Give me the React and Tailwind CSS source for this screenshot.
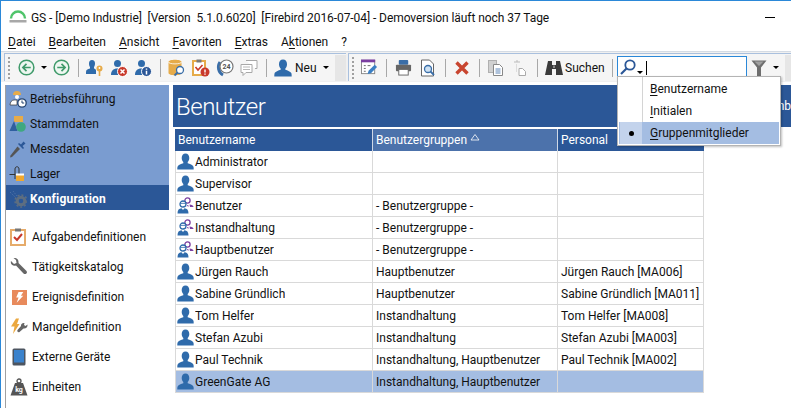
import React from 'react';

const Person = ({ className = 'w-[17px] h-[17px]' }) => (
  <svg viewBox="0 0 17 17" className={className}>
    <path d="M8.500 0.500c2.400 0 3.800 1.900 3.800 4.400 0 1.700-.7 3.200-1.600 4.100v1.200c1.900.7 5.300 1.700 5.800 3.500.2.800.2 2.300.2 2.800H0.300c0-.5 0-2 .2-2.800.5-1.800 3.900-2.800 5.800-3.500V9C5.400 8.100 4.700 6.600 4.700 4.900c0-2.500 1.400-4.400 3.800-4.400z" fill="#2f6bab" />
  </svg>
);

const Group = () => (
  <svg viewBox="0 0 17 17" className="w-[17px] h-[17px]">
    <circle cx="10.500" cy="3.500" r="2.600" fill="#fff" stroke="#7b3fa0" strokeWidth="1.300" />
    <path d="M12.500 7.500c2 .2 4 1 4 2.500h-3.500z" fill="#7b3fa0" />
    <path d="M10 8l1.500 1.500M11.500 8L10 9.500" stroke="#7b3fa0" strokeWidth="0.700" />
    <circle cx="6" cy="7" r="3" fill="#fff" stroke="#2f6bab" strokeWidth="1.300" />
    <path d="M3.500 6.500c1.500-.2 3.500-.2 5 0" stroke="#2f6bab" strokeWidth="0.800" fill="none" />
    <path d="M0.500 16.500c0-3.500 1.500-5 4-5.200L6 13l1.500-1.700c2.500.2 4 1.700 4 5.200z" fill="#2f6bab" />
  </svg>
);

const Slot = ({ children }) => <div className="w-[24px] h-[24px] flex items-center justify-center shrink-0">{children}</div>;

const Sep = () => (
  <div className="w-[10px] flex justify-center shrink-0">
    <div className="w-px h-[18px] bg-[#a8a8a8]" />
  </div>
);

const Grip = () => (
  <div className="flex flex-col gap-[2px] mr-[3px] ml-[3px] shrink-0">
    {[0, 1, 2, 3, 4, 5].map((i) => <div key={i} className="w-[2px] h-[2px] bg-[#a0a0a0]" />)}
  </div>
);

const Caret = () => <div className="w-0 h-0 border-x-[3px] border-x-transparent border-t-[3px] border-t-black" />;

const CircleArrow = ({ flip }) => (
  <svg viewBox="0 0 18 18" className="w-[17px] h-[17px]">
    <circle cx="9" cy="9" r="7.800" fill="#eef7f1" stroke="#3f9a6a" strokeWidth="1.600" />
    <path d={flip ? 'M4.500 9h8M9 5.200 12.800 9 9 12.800' : 'M13.500 9h-8M9 5.200 5.200 9 9 12.800'} fill="none" stroke="#3f9a6a" strokeWidth="1.800" />
  </svg>
);

const UserKey = () => (
  <svg viewBox="0 0 18 18" className="w-[18px] h-[18px]">
    <path d="M6 1c2 0 3 1.500 3 3.500S8.400 7.500 8 8v1.500c1 .4 2 .8 2 2V15H0c0-2.500 0-3.500 1-4.200.8-.5 2-.9 3-1.300V8C3.500 7.500 3 6.500 3 4.500S4 1 6 1z" fill="#2f6bab" />
    <circle cx="13.500" cy="9.500" r="3" fill="#e6ab4a" />
    <circle cx="13.500" cy="9" r="0.900" fill="#fff" />
    <path d="M12.700 11.500h1.600v5.500h-1.600z" fill="#e6ab4a" />
  </svg>
);

const UserBadge = ({ color, glyph }) => (
  <svg viewBox="0 0 18 18" className="w-[18px] h-[18px]">
    <circle cx="7.500" cy="4.500" r="3.500" fill="#2f6bab" />
    <path d="M1 16c0-4 2-6.500 6.500-6.500S12 12 12 16z" fill="#2f6bab" />
    <circle cx="12.500" cy="12.500" r="5" fill={color} stroke="#fff" strokeWidth="1" />
    {glyph === 'x' ? (
      <path d="M10.500 10.500l4 4m0-4l-4 4" stroke="#fff" strokeWidth="1.500" />
    ) : (
      <path d="M12.500 9.500v1.200M12.500 11.800v3.600" stroke="#fff" strokeWidth="1.500" />
    )}
  </svg>
);

const DbSearch = () => (
  <svg viewBox="0 0 18 18" className="w-[18px] h-[18px]">
    <path d="M0.500 3c0-3 13-3 13 0v11c0 3-13 3-13 0z" fill="#e6ab4a" />
    <path d="M0.500 3c0 2.500 13 2.500 13 0" fill="none" stroke="#fff" strokeWidth="0.800" />
    <circle cx="12" cy="11" r="3.500" fill="#fff" stroke="#3a6ea8" strokeWidth="1.300" />
    <path d="M9.500 13.500l-3 3" stroke="#3a6ea8" strokeWidth="1.800" />
  </svg>
);

const ClipAlert = () => (
  <svg viewBox="0 0 18 18" className="w-[18px] h-[18px]">
    <rect x="1" y="2" width="12" height="14" fill="#fff" stroke="#e6ab4a" strokeWidth="2" />
    <rect x="4.500" y="0.500" width="5" height="3" fill="#7a7a7a" />
    <path d="M3.500 8l2.500 3 4.500-5" fill="none" stroke="#c8392b" strokeWidth="1.600" />
    <circle cx="13" cy="13" r="4.500" fill="#c8392b" />
    <path d="M13 10.500v3M13 14.500v1.200" stroke="#fff" strokeWidth="1.400" />
  </svg>
);

const Clock24 = () => (
  <svg viewBox="0 0 18 18" className="w-[18px] h-[18px]">
    <path d="M4 3a9 9 0 0 0 3 13" fill="none" stroke="#3a6ea8" strokeWidth="3" />
    <circle cx="10.500" cy="7.500" r="6.500" fill="#fff" stroke="#777" strokeWidth="1.200" />
    <text x="10.500" y="10" textAnchor="middle" fontSize="7" fontWeight="700" fill="#555">24</text>
  </svg>
);

const Chat = () => (
  <svg viewBox="0 0 18 18" className="w-[18px] h-[18px]">
    <path d="M6 1.500h11v8H15M1 5.500h11v8H6l-3 3v-3H1z" fill="#fff" stroke="#a8a8a8" strokeWidth="1" />
    <path d="M3 8h7M3 10.500h7" stroke="#b8b8b8" />
  </svg>
);

const EditCal = () => (
  <svg viewBox="0 0 18 18" className="w-[17px] h-[17px]">
    <rect x="0.500" y="1.500" width="14" height="14" fill="#fff" stroke="#888" />
    <rect x="0" y="0.500" width="15" height="3" fill="#7b3fa0" />
    <path d="M3 7h2M7 7h3M3 10h2M3 13h2" stroke="#666" />
    <path d="M7 16l1-3.500 6.500-6.500 2.500 2.500-6.500 6.500z" fill="#3a7fc4" />
  </svg>
);

const Printer = () => (
  <svg viewBox="0 0 18 18" className="w-[17px] h-[17px]">
    <rect x="4" y="1" width="10" height="5" rx="1" fill="#3a6ea8" />
    <rect x="1" y="6" width="16" height="7" rx="1" fill="#666" />
    <rect x="4" y="11" width="10" height="6" fill="#fff" stroke="#666" />
  </svg>
);

const Preview = () => (
  <svg viewBox="0 0 18 18" className="w-[18px] h-[18px]">
    <path d="M2.500 1h8l4 4v12h-12z" fill="#fff" stroke="#666" />
    <circle cx="9" cy="10" r="3.500" fill="#cfe2f3" stroke="#3a6ea8" strokeWidth="1.300" />
    <path d="M11.500 12.500l3.500 3.500" stroke="#3a6ea8" strokeWidth="1.800" />
  </svg>
);

const CrossRed = () => (
  <svg viewBox="0 0 14 14" className="w-[14px] h-[14px]">
    <path d="M1.500 1.500l11 11m0-11l-11 11" stroke="#c8452f" strokeWidth="3.400" />
  </svg>
);

const CopyIcon = () => (
  <svg viewBox="0 0 16 16" className="w-[16px] h-[16px]">
    <rect x="0.500" y="0.500" width="8" height="12" fill="#d0d0d0" stroke="#b0b0b0" />
    <path d="M5.500 4.500h6l3 3v8h-9z" fill="#fff" stroke="#888" />
    <path d="M7.500 9h5M7.500 11h5M7.500 13h5" stroke="#5f86b8" />
  </svg>
);

const PasteIcon = () => (
  <svg viewBox="0 0 16 16" className="w-[16px] h-[16px]">
    <path d="M2 2h6M4 1h2" stroke="#bbb" />
    <path d="M4.500 4v8" stroke="#ddd" />
    <path d="M7 8.500h3.500l3 3v4H7z" fill="#fff" stroke="#aaa" />
  </svg>
);

const Binoculars = () => (
  <svg viewBox="0 0 18 16" className="w-[18px] h-[16px] shrink-0">
    <path d="M3 1h4v4h4V1h4l3 14h-7V9H7v6H0z" fill="#3b3b3b" />
    <path d="M8 5.500h2V8H8z" fill="#888" />
  </svg>
);

const Funnel = () => (
  <svg viewBox="0 0 16 16" className="w-[16px] h-[16px]">
    <path d="M0.500 0.500h15L10 7.500V16H6V7.500z" fill="#6e6e6e" />
    <path d="M3.500 1.500h9L8 6z" fill="#a0a0a0" />
  </svg>
);

const Search = () => (
  <svg viewBox="0 0 16 17" className="w-[16px] h-[17px]">
    <circle cx="10" cy="6" r="4.700" fill="#fff" stroke="#2b5797" strokeWidth="1.800" />
    <path d="M6.500 9.500L1 15" stroke="#2b5797" strokeWidth="2.200" />
  </svg>
);

const Logo = () => (
  <svg viewBox="0 0 18 14" className="w-[18px] h-[14px]">
    <path d="M2 8.500a7 7 0 0 1 14 0" fill="none" stroke="#4fc46a" strokeWidth="2.400" />
    <rect x="0.500" y="10" width="17" height="2.500" fill="#a8a8a8" />
  </svg>
);

const U = ({ children }) => <span className="underline underline-offset-2">{children}</span>;

const menus = [
  [<U key="u">D</U>, 'atei'],
  [<U key="u">B</U>, 'earbeiten'],
  [<U key="u">A</U>, 'nsicht'],
  [<U key="u">F</U>, 'avoriten'],
  [<U key="u">E</U>, 'xtras'],
  ['A', <U key="u">k</U>, 'tionen'],
  ['?'],
];

const navTop = ['Betriebsführung', 'Stammdaten', 'Messdaten', 'Lager'];

const NavIcon = ({ i }) => {
  if (i === 0) return (
    <svg viewBox="0 0 18 18" className="w-[18px] h-[18px]">
      <path d="M4 5a4 4 0 0 1 8 0z" fill="#e6ab4a" />
      <circle cx="8" cy="7" r="2" fill="#fff" />
      <path d="M1 15c0-3 2-5 4-5h3v5z" fill="#fff" stroke="#333" strokeWidth="0.700" />
      <circle cx="13" cy="13" r="4.200" fill="#fff" stroke="#23436f" strokeWidth="1.300" />
      <path d="M13 10.500V13h2.200" stroke="#23436f" fill="none" />
    </svg>
  );
  if (i === 1) return (
    <svg viewBox="0 0 18 18" className="w-[18px] h-[18px]">
      <rect x="5" y="1" width="9" height="6" fill="#e6ab4a" />
      <path d="M5 6L0.500 16h8z" fill="#2f5f9f" />
      <circle cx="12" cy="12" r="4.800" fill="#3fa880" />
    </svg>
  );
  if (i === 2) return (
    <svg viewBox="0 0 18 18" className="w-[18px] h-[18px]">
      <path d="M8.500 6.500l2.500 2.500-8 8-2 .5.500-2z" fill="#555" />
      <path d="M9 4l5 5 1-1-1.500-2L16.500 3.500 14.500 1.500 12 4.500 10 3z" fill="#2b5797" />
    </svg>
  );
  if (i === 3) return (
    <svg viewBox="0 0 18 18" className="w-[18px] h-[18px]">
      <path d="M0.500 9.500H6M6 14V4c0-3 4-3 4 0v5" fill="none" stroke="#333" strokeWidth="1" />
      <rect x="7" y="10" width="8" height="6" fill="#f0a830" />
      <rect x="7" y="8.500" width="8" height="2" fill="#fff" />
    </svg>
  );
  return (
    <svg viewBox="0 0 18 18" className="w-[18px] h-[18px]">
      <circle cx="12" cy="11" r="3.800" fill="none" stroke="#5e6e80" strokeWidth="3" />
      <circle cx="12" cy="11" r="6" fill="none" stroke="#5e6e80" strokeWidth="1.500" strokeDasharray="2 2" />
      <path d="M1 2l5 5M4 1l4 5" stroke="#4a6fa5" strokeDasharray="1.500 1" />
    </svg>
  );
};

const Aufgaben = () => (
  <svg viewBox="0 0 18 18" className="w-[18px] h-[18px]">
    <rect x="1" y="2" width="14" height="15" fill="#fff" stroke="#e6ab6a" strokeWidth="2" />
    <rect x="5" y="0.500" width="6" height="3" fill="#777" />
    <path d="M4 9l3 3 5-6" fill="none" stroke="#c8392b" strokeWidth="2" />
  </svg>
);

const Wrench = () => (
  <svg viewBox="0 0 18 18" className="w-[18px] h-[18px]">
    <path d="M1 3l3 3 2.500-1L6 2 3.500 0C6-.5 9 1 8.500 5l8 8c1.500 2-1 4-3 2.500l-7.500-8C3 8.500 0 6 1 3z" fill="#666" />
  </svg>
);

const Bolt = () => (
  <svg viewBox="0 0 16 16" className="w-[15px] h-[15px]">
    <rect width="16" height="16" fill="#e88a5c" />
    <path d="M7 2h5L9.500 6H12L5 13.500 7 8H4.500z" fill="#fff" />
  </svg>
);

const BoltWrench = () => (
  <svg viewBox="0 0 18 18" className="w-[18px] h-[18px]">
    <path d="M6 0.500h3L7 6h2.500L3 16l1.500-7.500H1z" fill="#eba83f" />
    <path d="M17.500 6.500l-2 1.500-1.500-1 .5-2c-2-.5-4 1-3.500 3L7.500 12c-1 1.500 1 3 2 2l4-3.500c2 .5 4.500-1 4-4z" fill="#666" />
  </svg>
);

const Tablet = () => (
  <svg viewBox="0 0 14 18" className="w-[14px] h-[18px]">
    <rect x="0.500" y="0.500" width="13" height="17" rx="1.500" fill="#4d5560" />
    <rect x="2" y="2" width="10" height="12.500" fill="#3a82cc" />
  </svg>
);

const Weight = () => (
  <svg viewBox="0 0 18 18" className="w-[18px] h-[18px]">
    <path d="M5 5h8l4.500 12.500H0.500z" fill="#555" />
    <circle cx="9" cy="3" r="2" fill="none" stroke="#555" strokeWidth="1.300" />
    <text x="9" y="14" textAnchor="middle" fontSize="7" fontWeight="700" fill="#fff">kg</text>
  </svg>
);

const navBottom = [
  ['Aufgabendefinitionen', <Aufgaben key="i" />],
  ['Tätigkeitskatalog', <Wrench key="i" />],
  ['Ereignisdefinition', <Bolt key="i" />],
  ['Mangeldefinition', <BoltWrench key="i" />],
  ['Externe Geräte', <Tablet key="i" />],
  ['Einheiten', <Weight key="i" />],
];

const rows = [
  ['Administrator', '', '', 'p'],
  ['Supervisor', '', '', 'p'],
  ['Benutzer', '- Benutzergruppe -', '', 'g'],
  ['Instandhaltung', '- Benutzergruppe -', '', 'g'],
  ['Hauptbenutzer', '- Benutzergruppe -', '', 'g'],
  ['Jürgen Rauch', 'Hauptbenutzer', 'Jürgen Rauch [MA006]', 'p'],
  ['Sabine Gründlich', 'Hauptbenutzer', 'Sabine Gründlich [MA011]', 'p'],
  ['Tom Helfer', 'Instandhaltung', 'Tom Helfer [MA008]', 'p'],
  ['Stefan Azubi', 'Instandhaltung', 'Stefan Azubi [MA003]', 'p'],
  ['Paul Technik', 'Instandhaltung, Hauptbenutzer', 'Paul Technik [MA002]', 'p'],
  ['GreenGate AG', 'Instandhaltung, Hauptbenutzer', '', 'p'],
];

export default function App() {
  return (
    <div className='w-[791px] h-[408px] overflow-hidden bg-white relative text-[12px] text-[#111] border-l border-t border-[#2b88d8] font-["Roboto",sans-serif]'>
      {/* title bar */}
      <div className="h-[32px] flex items-center pl-[8px]">
        <Logo />
        <span className="ml-[4px] mt-[1px] whitespace-pre tracking-[-0.07px]">GS - [Demo Industrie]  [Version  5.1.0.6020]  [Firebird 2016-07-04] - Demoversion läuft noch 37 Tage</span>
        <div className="ml-auto mr-[16px] w-[10px] h-px bg-black" />
      </div>

      {/* menu */}
      <div className="h-[18px] flex items-center gap-[13px] pl-[7px]">
        {menus.map((m, i) => <span key={i}>{m}</span>)}
      </div>

      {/* toolbar */}
      <div className="h-[31px] bg-[#f0f0f0] border-t border-[#d4dbe4] flex pl-[3px] pt-px">
        <div className="flex items-center h-[28px] border-l border-t border-[#a9c0de] w-[342px] shrink-0 bg-[#f5f5f5]">
          <Grip />
          <div className="w-px shrink-0" />
          <Slot><CircleArrow /></Slot>
          <div className="w-[11px] flex justify-center"><Caret /></div>
          <Slot><CircleArrow flip /></Slot>
          <Sep />
          <Slot><UserKey /></Slot>
          <Slot><UserBadge color="#c8392b" glyph="x" /></Slot>
          <Slot><UserBadge color="#2b5797" glyph="i" /></Slot>
          <Sep />
          <Slot><DbSearch /></Slot>
          <Slot><ClipAlert /></Slot>
          <Slot><Clock24 /></Slot>
          <Slot><Chat /></Slot>
          <Sep />
          <Slot><Person className="w-[18px] h-[18px]" /></Slot>
          <span>Neu</span>
          <div className="ml-[6px]"><Caret /></div>
          <div className="ml-auto w-[11px] h-[26px] bg-[#e6e6e6]" />
        </div>
        <div className="flex items-center h-[28px] border-l border-t border-[#a9c0de] ml-[2px] flex-1 min-w-0 bg-[#f5f5f5]">
          <Grip />
          <Slot><EditCal /></Slot>
          <Sep />
          <Slot><Printer /></Slot>
          <div className="w-px shrink-0" />
          <Slot><Preview /></Slot>
          <Sep />
          <Slot><CrossRed /></Slot>
          <Sep />
          <Slot><CopyIcon /></Slot>
          <Slot><PasteIcon /></Slot>
          <Sep />
          <div className="w-[3px] shrink-0" />
          <Binoculars />
          <span className="ml-[2px] w-[42px] shrink-0">Suchen</span>
          <Sep />
          <div className="w-[130px] h-[23px] bg-white border border-[#2b88d8] flex items-center pl-[2px] shrink-0">
            <Search />
            <div className="ml-px mt-[10px]"><Caret /></div>
            <div className="ml-[3px] w-px h-[14px] bg-black" />
          </div>
          <div className="ml-[4px]"><Funnel /></div>
          <div className="ml-[6px]"><Caret /></div>
          <div className="ml-auto w-[6px] h-[26px] bg-[#e6e6e6]" />
        </div>
      </div>

      {/* body */}
      <div className="flex mt-[3px] pl-[4px] h-[323px]">
        <aside className="w-[164px] shrink-0 border-l border-[#a0a0a0]">
          <div className="bg-[#7a9cd0]">
            {navTop.map((n, i) => (
              <div key={n} className="h-[25px] flex items-center pl-[3px] gap-[3px] pt-[2px]">
                <NavIcon i={i} />
                <span>{n}</span>
              </div>
            ))}
            <div className="h-[25px] flex items-center pl-[3px] gap-[3px] bg-[#2b5797] text-white font-bold tracking-[0.2px] pt-[2px]">
              <NavIcon i={4} />
              <span>Konfiguration</span>
            </div>
          </div>
          <div className="pt-[11px]">
            {navBottom.map(([n, ic]) => (
              <div key={n} className="h-[30px] flex items-center pt-[2px]">
                <div className="w-[26px] flex justify-center">{ic}</div>
                <span>{n}</span>
              </div>
            ))}
          </div>
        </aside>

        <main className="ml-[4px] flex-1 min-w-0">
          <div className="h-[42px] bg-[#2b5797] flex items-center pl-[3px] text-white">
            <span className="text-[24px] font-light tracking-[-0.5px] pt-[2px]">Benutzer</span>
            <span className="ml-auto">nb</span>
          </div>
          <div className="ml-[2px] mt-[2px] w-[529px]">
            <div className="grid grid-cols-[198px_185px_146px] h-[22px] text-white">
              <div className="bg-[#2b5797] flex items-center pl-[3px] border-r border-[#cfd8e6]">Benutzername</div>
              <div className="bg-[#4c72ab] flex items-center pl-[3px] border-r border-[#cfd8e6]">
                Benutzergruppen
                <svg viewBox="0 0 10 7" className="w-[10px] h-[7px] ml-[3px] -mt-[5px]"><path d="M5 .5L9 6H1z" fill="none" stroke="#fff" strokeWidth="0.800" /></svg>
              </div>
              <div className="bg-[#2b5797] flex items-center pl-[3px]">Personal</div>
            </div>
            {rows.map(([name, grp, pers, kind]) => {
              const sel = name === 'GreenGate AG';
              return (
                <div key={name} className={`grid grid-cols-[198px_185px_146px] h-[22px] border-b border-[#d9d9d9] ${sel ? 'bg-[#a4bde2]' : ''}`}>
                  <div className="flex items-center pl-[1px] border-r border-[#d9d9d9] border-l">
                    {kind === 'p' ? <Person /> : <Group />}
                    <span className="ml-[1px] truncate">{name}</span>
                  </div>
                  <div className="flex items-center pl-[3px] border-r border-[#d9d9d9] whitespace-nowrap">{grp}</div>
                  <div className="flex items-center pl-[3px] border-r border-[#d9d9d9] whitespace-nowrap">{pers}</div>
                </div>
              );
            })}
          </div>
        </main>
      </div>

      {/* search field options */}
      <div className="absolute left-[616px] top-[75px] w-[164px] h-[70px] bg-white border border-[#b4b4b4] shadow-[1px_1px_2px_rgba(0,0,0,0.25)] p-px">
        <div className="h-[22px] flex items-center pl-[31px]"><span><U>B</U>enutzername</span></div>
        <div className="h-[22px] flex items-center pl-[31px]"><span><U>I</U>nitialen</span></div>
        <div className="h-[22px] flex items-center pl-[31px] bg-[#a4bde2] relative">
          <span><U>G</U>ruppenmitglieder</span>
          <div className="absolute left-[1px] top-0 w-[22px] h-[22px] bg-[#c3d3ec] flex items-center justify-center">
            <div className="w-[5px] h-[5px] rounded-full bg-black" />
          </div>
        </div>
        <div className="absolute left-[24px] top-0 h-[45px] w-px bg-[#d4d4d4]" />
      </div>
    </div>
  );
}
